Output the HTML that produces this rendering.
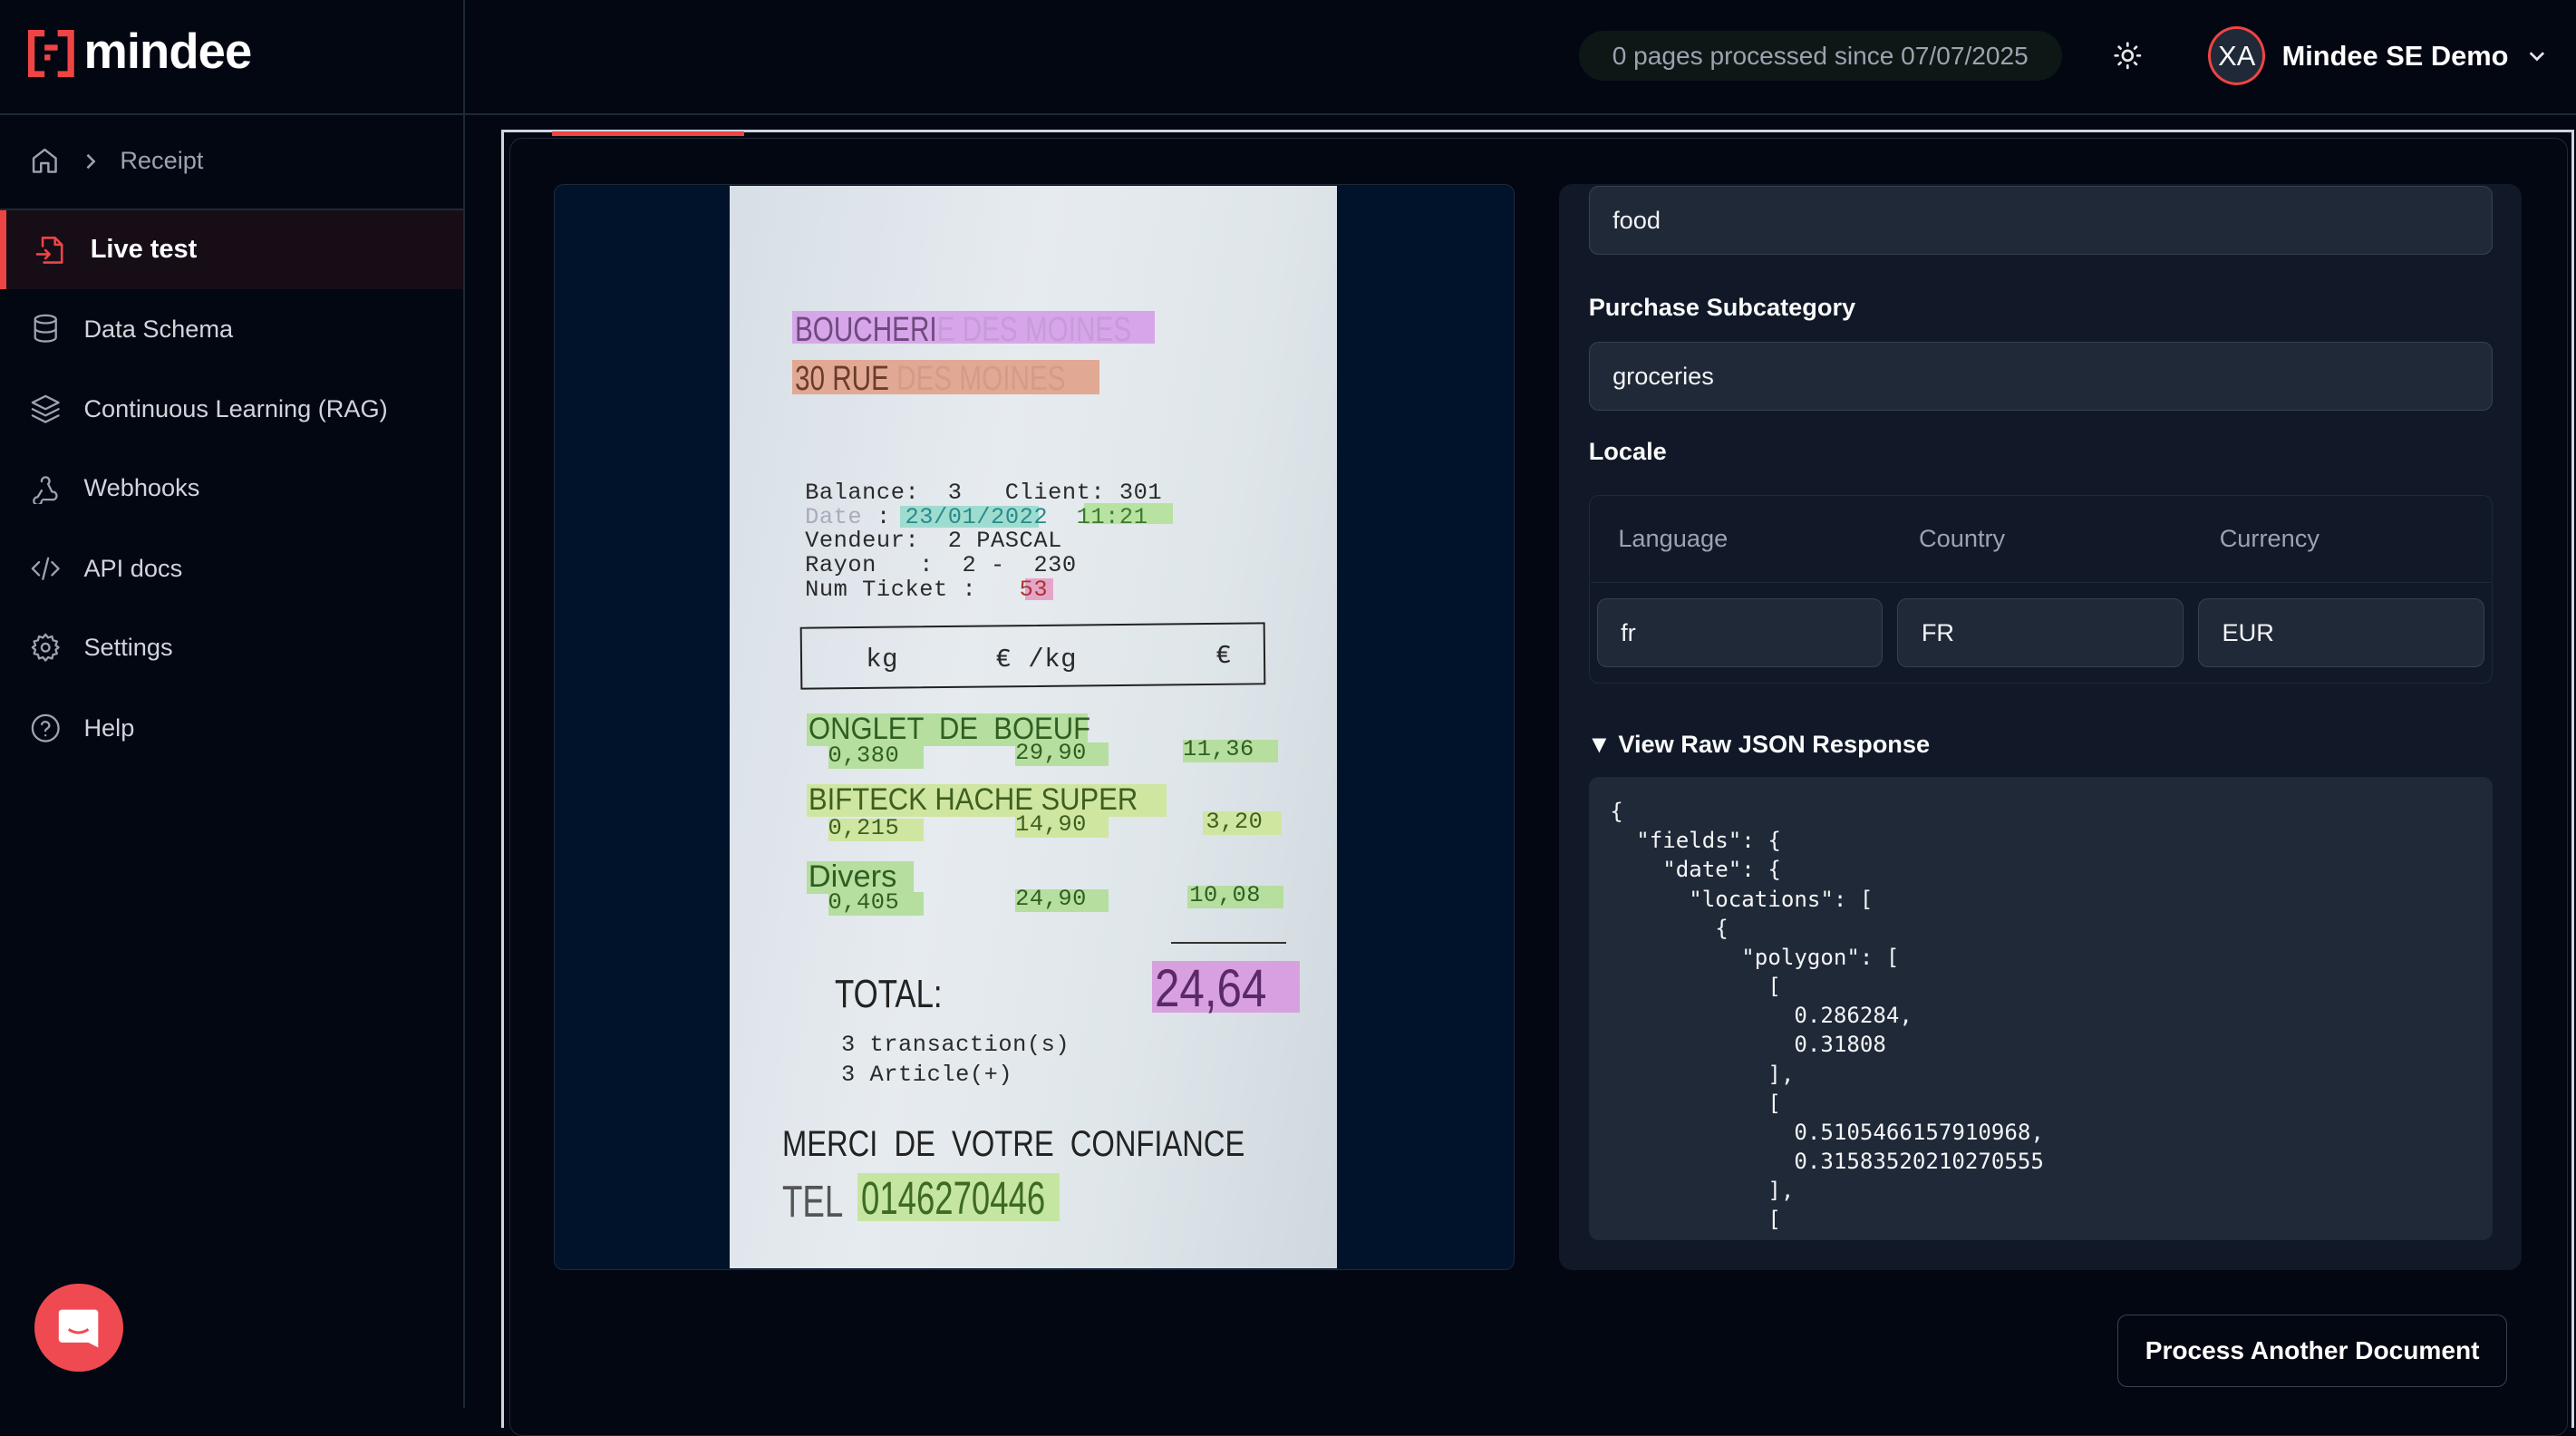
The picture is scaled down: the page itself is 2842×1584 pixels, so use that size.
<!DOCTYPE html>
<html><head><meta charset="utf-8">
<style>
html{zoom:1.8125}
*{box-sizing:border-box;margin:0;padding:0}
body{width:1568px;height:857px;overflow:hidden;background:#030712;font-family:"Liberation Sans",sans-serif;color:#fff;position:relative}
.a{position:absolute}
.nav{position:absolute;left:0;width:282px;height:48px;display:flex;align-items:center;color:#d1d5db;font-size:15px}
.nav svg{position:absolute;left:18px;width:19px;height:19px;fill:none;stroke:#9ca3af;stroke-width:1.6;stroke-linecap:round;stroke-linejoin:round}
.nav span{position:absolute;left:51px}
.inp{position:absolute;background:#1f2937;border:1px solid #374151;border-radius:6px;font-size:15px;color:#f3f4f6;padding-left:14px;display:flex;align-items:center}
.lbl{position:absolute;font-size:15px;font-weight:bold;color:#f9fafb}
.m{font-family:"Liberation Mono",monospace;position:absolute;color:#2a2a2a;white-space:pre;font-size:14px;letter-spacing:.3px}
.hl{position:absolute}
.c{font-family:"Liberation Sans",sans-serif;position:absolute;white-space:pre;transform-origin:0 50%}
pre{font-family:"DejaVu Sans Mono","Liberation Mono",monospace;font-size:13.3px;line-height:17.75px;color:#f3f4f6}
</style></head><body>
<div class="a" style="left:0;top:69px;width:1568px;height:1px;background:#1f2937"></div>
<div class="a" style="left:282px;top:0;width:1px;height:857px;background:#1f2937"></div>
<svg class="a" style="left:17px;top:18px" width="28" height="29" viewBox="0 0 28 29"><path d="M10 2H2v25h8M18 2h8v25h-8" fill="none" stroke="#ef4444" stroke-width="4"/><rect x="10" y="9" width="8" height="3.5" fill="#ef4444"/><rect x="10" y="15" width="3.5" height="3.5" fill="#ef4444"/></svg>
<div class="a" style="left:51px;top:14px;font-size:30px;font-weight:bold;letter-spacing:-0.5px">mindee</div>
<div class="a" style="left:961px;top:19px;width:294px;height:30px;border-radius:15px;background:#0d1716;color:#9ca3af;font-size:15.5px;display:flex;align-items:center;justify-content:center">0 pages processed since 07/07/2025</div>
<svg class="a" style="left:1286px;top:25px" width="18" height="18" viewBox="0 0 24 24" fill="none" stroke="#e5e7eb" stroke-width="2" stroke-linecap="round"><circle cx="12" cy="12" r="4"/><path d="M12 2v2M12 20v2M2 12h2M20 12h2M4.9 4.9l1.4 1.4M17.7 17.7l1.4 1.4M4.9 19.1l1.4-1.4M17.7 6.3l1.4-1.4"/></svg>
<div class="a" style="left:1344px;top:16px;width:35px;height:36px;border-radius:50%;border:2px solid #ef4444;background:#1f2937;font-size:17px;display:flex;align-items:center;justify-content:center">XA</div>
<div class="a" style="left:1389px;top:24px;font-size:17px;font-weight:bold">Mindee SE Demo</div>
<svg class="a" style="left:1538px;top:28px" width="12" height="12" viewBox="0 0 12 12" fill="none" stroke="#e5e7eb" stroke-width="1.5"><path d="M2 4l4 4 4-4"/></svg>
<div class="a" style="left:0;top:127px;width:282px;height:1px;background:#1f2937"></div>
<svg class="a" style="left:18px;top:89px" width="18" height="18" viewBox="0 0 24 24" fill="none" stroke="#9ca3af" stroke-width="1.8" stroke-linejoin="round"><path d="M3 10l9-7 9 7v11h-6v-7H9v7H3z"/></svg>
<svg class="a" style="left:50px;top:93px" width="9" height="10" viewBox="0 0 9 10" fill="none" stroke="#9ca3af" stroke-width="1.4"><path d="M3 1l4 4-4 4"/></svg>
<div class="a" style="left:73px;top:89px;font-size:15px;color:#9ca3af">Receipt</div>
<div class="a" style="left:0;top:128px;width:282px;height:48px;background:#170d17"></div>
<div class="a" style="left:0;top:128px;width:4px;height:48px;background:#ef4444"></div>
<svg class="a" style="left:21px;top:141px" width="20" height="22" viewBox="0 0 24 24" fill="none" stroke="#ef4444" stroke-width="1.7" stroke-linecap="round" stroke-linejoin="round"><path d="M6 9V3h9l5 5v13H7M15 3v5h5M2 15h9M8 12l3 3-3 3"/></svg>
<div class="a" style="left:55px;top:143px;font-size:16px;font-weight:bold">Live test</div>
<div class="nav" style="top:176px"><svg viewBox="0 0 24 24"><ellipse cx="12" cy="5" rx="8" ry="3"/><path d="M4 5v14c0 1.7 3.6 3 8 3s8-1.3 8-3V5M4 12c0 1.7 3.6 3 8 3s8-1.3 8-3"/></svg><span>Data Schema</span></div>
<div class="nav" style="top:225px"><svg viewBox="0 0 24 24"><path d="M12 2l10 5-10 5L2 7z M2 12l10 5 10-5M2 17l10 5 10-5"/></svg><span>Continuous Learning (RAG)</span></div>
<div class="nav" style="top:273px"><svg viewBox="0 0 24 24"><path d="M9 14l-3 5a3 3 0 1 0 3 3M9 7a3 3 0 1 1 5 2l3 6M18 15a3 3 0 1 1-1 6H10"/></svg><span>Webhooks</span></div>
<div class="nav" style="top:322px"><svg viewBox="0 0 24 24"><path d="M7 7l-5 5 5 5M17 7l5 5-5 5M14 4l-4 16"/></svg><span>API docs</span></div>
<div class="nav" style="top:370px"><svg viewBox="0 0 24 24"><circle cx="12" cy="12" r="3"/><path d="M12 2l2 2.5 3-1 .8 3 3 .8-1 3L22 12l-2.2 1.7 1 3-3 .8-.8 3-3-1L12 22l-2-2.5-3 1-.8-3-3-.8 1-3L2 12l2.2-1.7-1-3 3-.8.8-3 3 1z"/></svg><span>Settings</span></div>
<div class="nav" style="top:419px"><svg viewBox="0 0 24 24"><circle cx="12" cy="12" r="10"/><path d="M9.1 9a3 3 0 0 1 5.8 1c0 2-3 2.5-3 4M12 17.5v.1"/></svg><span>Help</span></div>
<div class="a" style="left:21px;top:781px;width:54px;height:54px;border-radius:50%;background:#ef4a52"></div>
<svg class="a" style="left:35px;top:795px" width="27" height="28" viewBox="0 0 27 28"><path d="M3 2h20a2 2 0 0 1 2 2v21l-6-3H3a2 2 0 0 1-2-2V4a2 2 0 0 1 2-2z" fill="#fff"/><path d="M7 14q6 4 12 0" fill="none" stroke="#ef4a52" stroke-width="1.6"/></svg>
<div class="a" style="left:305px;top:79px;width:1262px;height:790px;border:2px solid #cbd5e1;border-bottom:none"></div>
<div class="a" style="left:310px;top:84px;width:1253px;height:790px;border:1px solid #1f2937;border-radius:8px"></div>
<div class="a" style="left:336px;top:80px;width:117px;height:3px;background:#ef4444"></div>
<div class="a" style="left:337px;top:112px;width:585px;height:661px;background:#01132a;border:1px solid #1f2937;border-radius:6px;overflow:hidden"></div>
<div class="a" style="left:444px;top:113px;width:370px;height:659px;overflow:hidden;background:linear-gradient(100deg,#d7dfe6,#e6ebef 40%,#dfe6ea 70%,#cfd8df)">
 <div class="hl" style="left:38px;top:76px;width:221px;height:20px;background:#d7a5ea"></div>
 <div class="c" style="left:40px;top:76px;font-size:21px;color:#6d4a7c;transform:scaleX(.78)">BOUCHERI<span style="color:#c79bd8">E DES MOINES</span></div>
 <div class="hl" style="left:38px;top:106px;width:187px;height:21px;background:#e1a994"></div>
 <div class="c" style="left:40px;top:106px;font-size:21px;color:#6a3c2c;transform:scaleX(.78)">30 RUE <span style="color:#d49c88">DES MOINES</span></div>
 <div class="m" style="left:46px;top:179px">Balance:  3   Client: 301</div>
 <div class="hl" style="left:104px;top:195px;width:84px;height:13px;background:#9fdcd0"></div>
 <div class="hl" style="left:216px;top:193px;width:54px;height:13px;background:#b8e2a2"></div>
 <div class="m" style="left:46px;top:194px"><span style="color:#aab">Date</span> : <span style="color:#2a8a8a">23/01/2022</span>  <span style="color:#3b7a2b">11:21</span></div>
 <div class="m" style="left:46px;top:208px">Vendeur:  2 PASCAL</div>
 <div class="m" style="left:46px;top:223px">Rayon   :  2 -  230</div>
 <div class="hl" style="left:180px;top:239px;width:17px;height:13px;background:#e6a5c8"></div>
 <div class="m" style="left:46px;top:238px">Num Ticket :   <span style="color:#a33">53</span></div>
 <div class="hl" style="left:43px;top:267px;width:283px;height:38px;border:1.5px solid #222;transform:rotate(-.6deg)"></div>
 <div class="m" style="left:83px;top:279px;font-size:16px">kg</div>
 <div class="m" style="left:162px;top:279px;font-size:16px">€ /kg</div>
 <div class="m" style="left:296px;top:277px;font-size:16px">€</div>
 <div class="hl" style="left:47px;top:321px;width:171px;height:20px;background:#b5de9f"></div>
 <div class="c" style="left:48px;top:320px;font-size:19px;color:#2f5e22;transform:scaleX(.9)">ONGLET  DE  BOEUF</div>
 <div class="hl" style="left:60px;top:341px;width:58px;height:14px;background:#b5de9f"></div>
 <div class="hl" style="left:174px;top:339px;width:57px;height:14px;background:#b5de9f"></div>
 <div class="hl" style="left:276px;top:337px;width:58px;height:14px;background:#b5de9f"></div>
 <div class="m" style="left:60px;top:339px;color:#2f5e22">0,380</div><div class="m" style="left:174px;top:337px;color:#2f5e22">29,90</div><div class="m" style="left:276px;top:335px;color:#2f5e22">11,36</div>
 <div class="hl" style="left:47px;top:364px;width:219px;height:20px;background:#cfe6a0"></div>
 <div class="c" style="left:48px;top:363px;font-size:19px;color:#3e5e1f;transform:scaleX(.9)">BIFTECK HACHE SUPER</div>
 <div class="hl" style="left:60px;top:385px;width:58px;height:14px;background:#cfe6a0"></div>
 <div class="hl" style="left:174px;top:383px;width:57px;height:14px;background:#cfe6a0"></div>
 <div class="hl" style="left:288px;top:381px;width:48px;height:14px;background:#cfe6a0"></div>
 <div class="m" style="left:60px;top:383px;color:#3e5e1f">0,215</div><div class="m" style="left:174px;top:381px;color:#3e5e1f">14,90</div><div class="m" style="left:290px;top:379px;color:#3e5e1f">3,20</div>
 <div class="hl" style="left:47px;top:411px;width:65px;height:20px;background:#b5de9f"></div>
 <div class="c" style="left:48px;top:410px;font-size:19px;color:#2f5e22">Divers</div>
 <div class="hl" style="left:60px;top:430px;width:58px;height:14px;background:#b5de9f"></div>
 <div class="hl" style="left:174px;top:428px;width:57px;height:14px;background:#b5de9f"></div>
 <div class="hl" style="left:279px;top:426px;width:58px;height:14px;background:#b5de9f"></div>
 <div class="m" style="left:60px;top:428px;color:#2f5e22">0,405</div><div class="m" style="left:174px;top:426px;color:#2f5e22">24,90</div><div class="m" style="left:280px;top:424px;color:#2f5e22">10,08</div>
 <div class="hl" style="left:269px;top:460px;width:70px;height:1.5px;background:#333"></div>
 <div class="c" style="left:64px;top:479px;font-size:24px;color:#222;transform:scaleX(.8)">TOTAL:</div>
 <div class="hl" style="left:257px;top:472px;width:90px;height:31px;background:#d9a0e0"></div>
 <div class="c" style="left:259px;top:470px;font-size:32px;color:#5a2a66;transform:scaleX(.85)">24,64</div>
 <div class="m" style="left:68px;top:515px">3 transaction(s)</div>
 <div class="m" style="left:68px;top:533px">3 Article(+)</div>
 <div class="c" style="left:32px;top:571px;font-size:22px;color:#222;transform:scaleX(.82)">MERCI  DE  VOTRE  CONFIANCE</div>
 <div class="c" style="left:32px;top:603px;font-size:27px;color:#555;transform:scaleX(.75)">TEL</div>
 <div class="hl" style="left:78px;top:601px;width:123px;height:29px;background:#c5e6a0"></div>
 <div class="c" style="left:80px;top:600px;font-size:28px;color:#3d6a25;transform:scaleX(.72)">0146270446</div>
</div>
<div class="a" style="left:949px;top:112px;width:586px;height:661px;background:#111827;border-radius:8px"></div>
<div class="inp" style="left:967px;top:113px;width:550px;height:42px">food</div>
<div class="lbl" style="left:967px;top:178px">Purchase Subcategory</div>
<div class="inp" style="left:967px;top:208px;width:550px;height:42px">groceries</div>
<div class="lbl" style="left:967px;top:266px">Locale</div>
<div class="a" style="left:967px;top:301px;width:550px;height:115px;border:1px solid #1f2937;border-radius:6px"></div>
<div class="a" style="left:968px;top:354px;width:548px;height:1px;background:#1f2937"></div>
<div class="a" style="left:985px;top:319px;font-size:15px;color:#9ca3af">Language</div>
<div class="a" style="left:1168px;top:319px;font-size:15px;color:#9ca3af">Country</div>
<div class="a" style="left:1351px;top:319px;font-size:15px;color:#9ca3af">Currency</div>
<div class="inp" style="left:972px;top:364px;width:174px;height:42px">fr</div>
<div class="inp" style="left:1155px;top:364px;width:174px;height:42px">FR</div>
<div class="inp" style="left:1338px;top:364px;width:174px;height:42px">EUR</div>
<div class="lbl" style="left:966px;top:444px">▼ View Raw JSON Response</div>
<div class="a" style="left:967px;top:473px;width:550px;height:282px;background:#1f2937;border-radius:6px;overflow:hidden">
<pre style="position:absolute;left:13px;top:12px">{
  "fields": {
    "date": {
      "locations": [
        {
          "polygon": [
            [
              0.286284,
              0.31808
            ],
            [
              0.5105466157910968,
              0.31583520210270555
            ],
            [
              0.510267</pre>
</div>
<div class="a" style="left:1289px;top:800px;width:237px;height:44px;border:1px solid #374151;border-radius:6px;font-size:15.5px;font-weight:bold;display:flex;align-items:center;justify-content:center">Process Another Document</div>
</body></html>
